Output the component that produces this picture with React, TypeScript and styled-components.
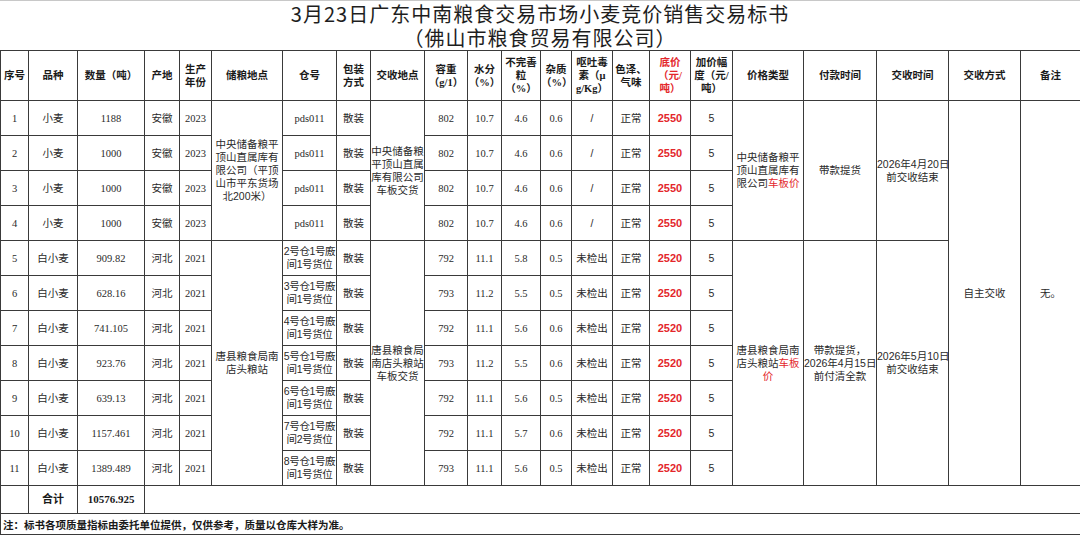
import React from "react";
import styled, { createGlobalStyle } from "styled-components";

const GlobalStyle = createGlobalStyle`
  html, body {
    margin: 0;
    padding: 0;
    background: #fff;
  }
  body {
    font-family: "Noto Sans CJK SC", sans-serif;
    color: #222;
  }
`;

const Sheet = styled.div`
  width: 1080px;
  background: #fff;
`;

const Title = styled.div`
  height: 50px;
  box-sizing: border-box;
  border-top: 1px solid #c8c8c8;
  padding-top: 1px;
  display: flex;
  flex-direction: column;
  align-items: center;
  font-family: "Noto Sans CJK SC", sans-serif;
  font-size: 20px;
  font-weight: 400;
  letter-spacing: 1px;
  line-height: 24px;
  color: #1e1e1e;
`;

const Grid = styled.table`
  width: 1080px;
  border-collapse: collapse;
  table-layout: fixed;
`;

const HeadRow = styled.tr`
  height: 50px;
`;

const BodyRow = styled.tr`
  height: 35px;
`;

const SumRow = styled.tr`
  height: 28px;
`;

const NoteRow = styled.tr`
  height: 21px;
`;

const HeadCell = styled.th<{ $red?: boolean }>`
  border: 1px solid #3a3a3a;
  padding: 0;
  font-family: "Liberation Serif", "Noto Sans CJK SC", sans-serif;
  font-size: 10.5px;
  font-weight: 700;
  line-height: 13px;
  white-space: pre;
  overflow: hidden;
  text-align: center;
  vertical-align: middle;
  color: ${(p) => (p.$red ? "#e3262b" : "#1a1a1a")};
`;

type Kind = "serif" | "sans" | "price" | "text" | "tight";

const Cell = styled.td<{ $kind?: Kind }>`
  border: 1px solid #3a3a3a;
  padding: 0;
  text-align: center;
  vertical-align: middle;
  white-space: pre;
  overflow: hidden;
  font-size: ${(p) => (p.$kind === "price" ? "11px" : "10.5px")};
  letter-spacing: ${(p) => (p.$kind === "tight" ? "-0.4px" : "0")};
  line-height: 13px;
  font-weight: ${(p) => (p.$kind === "price" ? 700 : 400)};
  color: ${(p) => (p.$kind === "price" ? "#e3262b" : "#2a2a2a")};
  font-family: ${(p) =>
    p.$kind === "serif" || !p.$kind
      ? `"Liberation Serif", "Noto Sans CJK SC", serif`
      : `"Liberation Sans", "Noto Sans CJK SC", sans-serif`};
`;

const SumCell = styled.td`
  border: 1px solid #3a3a3a;
  padding: 0;
  text-align: center;
  vertical-align: middle;
  font-family: "Liberation Serif", "Noto Sans CJK SC", serif;
  font-size: 11px;
  font-weight: 700;
  line-height: 13px;
  color: #1a1a1a;
`;

const NoteCell = styled.td`
  border: 1px solid #3a3a3a;
  padding: 0 0 0 2px;
  text-align: left;
  vertical-align: middle;
  font-family: "Noto Sans CJK SC", sans-serif;
  font-size: 10.5px;
  font-weight: 700;
  line-height: 13px;
  color: #1a1a1a;
`;

const Red = styled.span`
  color: #e3262b;
`;

const widths = [
  28, 49, 67, 35, 32, 71, 54, 34, 54, 43, 34, 39, 31, 41, 37, 41, 42, 71, 73,
  72, 72, 60,
];

const heads = [
  "序号",
  "品种",
  "数量（吨）",
  "产地",
  "生产\n年份",
  "储粮地点",
  "仓号",
  "包装\n方式",
  "交收地点",
  "容重\n（g/1）",
  "水分\n（%）",
  "不完善\n粒\n（%）",
  "杂质\n（%）",
  "呕吐毒\n素（μ\ng/Kg）",
  "色泽、\n气味",
  "底价\n（元/\n吨）",
  "加价幅\n度（元/\n吨）",
  "价格类型",
  "付款时间",
  "交收时间",
  "交收方式",
  "备注",
];

type Lot = {
  kind: string;
  qty: string;
  origin: string;
  year: string;
  bin: string;
  weight: string;
  water: string;
  broken: string;
  impurity: string;
  toxin: string;
  price: string;
};

const lots: Lot[] = [
  { kind: "小麦", qty: "1188", origin: "安徽", year: "2023", bin: "pds011", weight: "802", water: "10.7", broken: "4.6", impurity: "0.6", toxin: "/", price: "2550" },
  { kind: "小麦", qty: "1000", origin: "安徽", year: "2023", bin: "pds011", weight: "802", water: "10.7", broken: "4.6", impurity: "0.6", toxin: "/", price: "2550" },
  { kind: "小麦", qty: "1000", origin: "安徽", year: "2023", bin: "pds011", weight: "802", water: "10.7", broken: "4.6", impurity: "0.6", toxin: "/", price: "2550" },
  { kind: "小麦", qty: "1000", origin: "安徽", year: "2023", bin: "pds011", weight: "802", water: "10.7", broken: "4.6", impurity: "0.6", toxin: "/", price: "2550" },
  { kind: "白小麦", qty: "909.82", origin: "河北", year: "2021", bin: "2号仓1号廒\n间1号货位", weight: "792", water: "11.1", broken: "5.8", impurity: "0.5", toxin: "未检出", price: "2520" },
  { kind: "白小麦", qty: "628.16", origin: "河北", year: "2021", bin: "3号仓1号廒\n间1号货位", weight: "793", water: "11.2", broken: "5.5", impurity: "0.5", toxin: "未检出", price: "2520" },
  { kind: "白小麦", qty: "741.105", origin: "河北", year: "2021", bin: "4号仓1号廒\n间1号货位", weight: "792", water: "11.1", broken: "5.6", impurity: "0.6", toxin: "未检出", price: "2520" },
  { kind: "白小麦", qty: "923.76", origin: "河北", year: "2021", bin: "5号仓1号廒\n间1号货位", weight: "793", water: "11.2", broken: "5.5", impurity: "0.6", toxin: "未检出", price: "2520" },
  { kind: "白小麦", qty: "639.13", origin: "河北", year: "2021", bin: "6号仓1号廒\n间1号货位", weight: "792", water: "11.1", broken: "5.6", impurity: "0.5", toxin: "未检出", price: "2520" },
  { kind: "白小麦", qty: "1157.461", origin: "河北", year: "2021", bin: "7号仓1号廒\n间2号货位", weight: "792", water: "11.1", broken: "5.7", impurity: "0.6", toxin: "未检出", price: "2520" },
  { kind: "白小麦", qty: "1389.489", origin: "河北", year: "2021", bin: "8号仓1号廒\n间1号货位", weight: "793", water: "11.1", broken: "5.6", impurity: "0.5", toxin: "未检出", price: "2520" },
];

const App = () => {
  return (
    <Sheet>
      <GlobalStyle />
      <Title>
        <div>3月23日广东中南粮食交易市场小麦竞价销售交易标书</div>
        <div>（佛山市粮食贸易有限公司）</div>
      </Title>
      <Grid>
        <colgroup>
          {widths.map((w, i) => (
            <col key={i} style={{ width: w }} />
          ))}
        </colgroup>
        <tbody>
          <HeadRow>
            {heads.map((h, i) => (
              <HeadCell key={i} $red={i === 15}>
                {h}
              </HeadCell>
            ))}
          </HeadRow>
          {lots.map((lot, i) => (
            <BodyRow key={i}>
              <Cell>{i + 1}</Cell>
              <Cell $kind="text">{lot.kind}</Cell>
              <Cell>{lot.qty}</Cell>
              <Cell $kind="text">{lot.origin}</Cell>
              <Cell>{lot.year}</Cell>
              {i === 0 && (
                <Cell $kind="text" rowSpan={4}>
                  {"中央储备粮平\n顶山直属库有\n限公司（平顶\n山市平东货场\n北200米）"}
                </Cell>
              )}
              {i === 4 && (
                <Cell $kind="text" rowSpan={7}>
                  {"唐县粮食局南\n店头粮站"}
                </Cell>
              )}
              <Cell $kind={i < 4 ? "serif" : "tight"}>{lot.bin}</Cell>
              <Cell $kind="text">散装</Cell>
              {i === 0 && (
                <Cell $kind="text" rowSpan={4}>
                  {"中央储备粮\n平顶山直属\n库有限公司\n车板交货"}
                </Cell>
              )}
              {i === 4 && (
                <Cell $kind="text" rowSpan={7}>
                  {"唐县粮食局\n南店头粮站\n车板交货"}
                </Cell>
              )}
              <Cell>{lot.weight}</Cell>
              <Cell>{lot.water}</Cell>
              <Cell>{lot.broken}</Cell>
              <Cell>{lot.impurity}</Cell>
              <Cell $kind="text">{lot.toxin}</Cell>
              <Cell $kind="text">正常</Cell>
              <Cell $kind="price">{lot.price}</Cell>
              <Cell $kind="sans">5</Cell>
              {i === 0 && (
                <>
                  <Cell $kind="text" rowSpan={4}>
                    {"中央储备粮平\n顶山直属库有\n限公司"}
                    <Red>车板价</Red>
                  </Cell>
                  <Cell $kind="text" rowSpan={4}>
                    带款提货
                  </Cell>
                  <Cell $kind="text" rowSpan={4}>
                    {"2026年4月20日\n前交收结束"}
                  </Cell>
                  <Cell $kind="text" rowSpan={11}>
                    自主交收
                  </Cell>
                  <Cell $kind="text" rowSpan={11}>
                    无。
                  </Cell>
                </>
              )}
              {i === 4 && (
                <>
                  <Cell $kind="text" rowSpan={7}>
                    {"唐县粮食局南\n店头粮站"}
                    <Red>{"车板\n价"}</Red>
                  </Cell>
                  <Cell $kind="text" rowSpan={7}>
                    {"带款提货，\n2026年4月15日\n前付清全款"}
                  </Cell>
                  <Cell $kind="text" rowSpan={7}>
                    {"2026年5月10日\n前交收结束"}
                  </Cell>
                </>
              )}
            </BodyRow>
          ))}
          <SumRow>
            <SumCell />
            <SumCell>合计</SumCell>
            <SumCell>10576.925</SumCell>
            <SumCell colSpan={19} />
          </SumRow>
          <NoteRow>
            <NoteCell colSpan={22}>
              注：标书各项质量指标由委托单位提供，仅供参考，质量以仓库大样为准。
            </NoteCell>
          </NoteRow>
        </tbody>
      </Grid>
    </Sheet>
  );
};

export default App;
